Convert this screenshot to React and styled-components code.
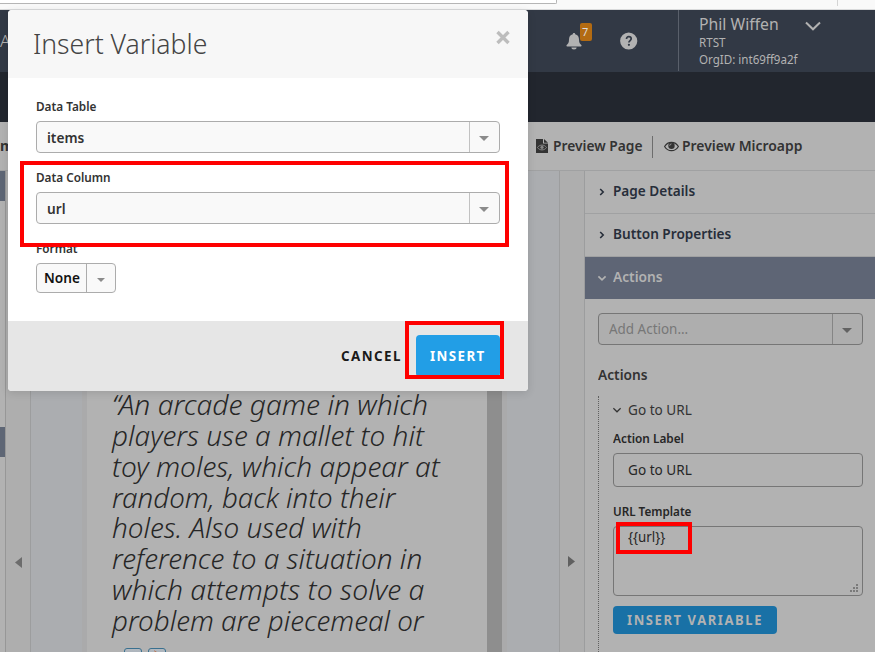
import React from "react";
import styled, { createGlobalStyle, css } from "styled-components";

const Global = createGlobalStyle`
  * { box-sizing: border-box; }
  html, body { margin: 0; padding: 0; overflow: hidden; }
  body { font-family: "Noto Sans", "Open Sans", sans-serif; background: #b2b2b2; }
`;

const Page = styled.div`
  position: relative;
  width: 875px;
  height: 652px;
  overflow: hidden;
  display: flex;
  flex-direction: column;
  background: #b2b2b2;
`;

/* A single line of text, squeezed horizontally by $x. */
const Text = styled.span`
  display: block;
  white-space: pre;
  transform-origin: 0 50%;
  font-size: ${(p) => p.$size || 14}px;
  line-height: ${(p) => p.$lh || 20}px;
  font-weight: ${(p) => p.$w || 400};
  color: ${(p) => p.$c || "#333"};
  ${(p) => p.$ls && css`letter-spacing: ${p.$ls}px;`}
  ${(p) => p.$x && css`transform: scaleX(${p.$x});`}
`;

const BrowserStrip = styled.div`
  flex: none;
  display: flex;
  height: 10px;
  background: #f9f9f9;
  border-bottom: 1px solid #d9dadb;
`;
const AddressBar = styled.div`
  width: 557px;
  height: 4px;
  background: #fff;
  border: solid #b5b5b5;
  border-width: 0 1px 1px 0;
  border-radius: 0 0 2px 0;
`;
const StripDivider = styled.div`
  width: 1px;
  height: 6px;
  margin-left: 280px;
  background: #d4d4d4;
`;

const Header = styled.header`
  flex: none;
  display: flex;
  height: 62px;
  background: #323945;
`;
const HeaderLead = styled.div`
  width: 566px;
  padding: 20px 0 0 0;
`;
const Bell = styled.div`
  position: relative;
  width: 54px;
  padding-top: 23px;
  svg { display: block; }
`;
const Badge = styled.div`
  position: absolute;
  left: 14px;
  top: 13px;
  width: 12px;
  height: 18px;
  border-radius: 2px;
  background: #b36b12;
  padding-left: 2px;
`;
const Help = styled.div`
  width: 58px;
  padding-top: 22px;
  svg { display: block; }
`;
const Account = styled.div`
  flex: 1;
  display: flex;
  height: 61px;
  padding: 2px 0 0 20px;
  border-left: 1px solid #5a606b;
`;
const AccountNames = styled.div`
  width: 106px;
`;
const AccountChevron = styled.svg`
  margin-top: 9px;
`;
const SubNav = styled.div`
  flex: none;
  height: 50px;
  background: #22262e;
`;

const Toolbar = styled.div`
  flex: none;
  display: flex;
  height: 49px;
  padding-top: 14px;
  border-bottom: 1px solid #a0a1a2;
  svg { flex: none; }
`;
const ToolbarLead = styled.div`
  width: 536px;
`;
const ToolLink = styled.div`
  display: flex;
  align-items: center;
  height: 20px;
  gap: ${(p) => p.$gap}px;
  width: ${(p) => p.$width}px;
`;
const ToolDivider = styled.div`
  width: 1px;
  height: 22px;
  margin-right: 11px;
  background: #6d6d6d;
`;

const Body = styled.main`
  flex: 1;
  display: flex;
  min-height: 0;
`;
const LeftRail = styled.div`
  display: flex;
  flex-direction: column;
  gap: 226px;
  width: 6px;
  border-right: 1px solid #979797;
`;
const RailBlock = styled.div`
  height: 30px;
  width: 5px;
  background: #5e6675;
`;
const Gutter = styled.div`
  width: 25px;
  padding: ${(p) => p.$pad};
  background: #aeaeae;
  border-right: 1px solid #9c9d9e;
  svg { display: block; }
`;
const Canvas = styled.div`
  display: flex;
  width: 529px;
  background: #abadb0;
  border-right: 1px solid #9c9d9e;
`;
const Edge = styled.div`
  width: 5px;
  background: #aaaaab;
`;
const CanvasSpace = styled.div`
  width: 51px;
`;
const Device = styled.div`
  width: 400px;
  padding: 218px 0 0 25px;
  background: #b2b2b2;
`;
const Quote = styled.div`
  height: 259px;
  font-style: italic;
`;
const BadgeRow = styled.div`
  display: flex;
  gap: 6px;
  padding-left: 12px;
`;
const SmallButton = styled.div`
  width: 18px;
  height: 12px;
  border: 1px solid #39708f;
  border-radius: 3px;
  background: linear-gradient(#b3b9bf, #9da9b7);
  svg { display: block; margin: 1px 0 0 5px; }
`;
const ScrollBar = styled.div`
  width: 15px;
  background: #8e8e8e;
`;

const Panel = styled.aside`
  flex: 1;
  display: flex;
  flex-direction: column;
`;
const Section = styled.div`
  flex: none;
  display: flex;
  align-items: center;
  height: 43px;
  padding: 0 0 3px 12px;
  gap: 6px;
  border-bottom: 1px solid ${(p) => (p.$open ? "#b2b2b2" : "#a0a1a2")};
  background: ${(p) => (p.$open ? "#5e6575" : "transparent")};
  svg { margin-top: 2px; }
`;
const PanelBody = styled.div`
  padding: 13px 12px 0 13px;
`;
const Select = styled.div`
  display: flex;
  width: ${(p) => p.$width}px;
  height: ${(p) => p.$height || 32}px;
  border: 1px solid ${(p) => p.$line || "#acacac"};
  border-radius: 4px;
  background: ${(p) => p.$bg || "#f9f9f9"};
`;
const SelectValue = styled.div`
  flex: 1;
  padding: ${(p) => p.$pad || "6px 0 0 9.5px"};
`;
const SelectArrow = styled.div`
  display: flex;
  align-items: center;
  justify-content: center;
  width: ${(p) => p.$width || 30}px;
  padding-right: 1px;
  border-left: 1px solid ${(p) => p.$line || "#c2c2c2"};
  svg { margin-top: 3px; }
`;
const PanelHeading = styled.div`
  padding-top: 20px;
`;
const ActionGroup = styled.div`
  height: 270px;
  margin-top: 11px;
  padding: 4px 0 0 14px;
  border-left: 1px dotted #606060;
`;
const GroupTitle = styled.div`
  display: flex;
  align-items: center;
  gap: 6px;
  margin: 0 0 10px -1px;
`;
const Input = styled.div`
  height: ${(p) => p.$height}px;
  margin: 5px 0 16px;
  padding: ${(p) => p.$pad} 0 0 14px;
  border: 1px solid #767676;
  border-radius: 4px;
`;
const TextArea = styled(Input)`
  position: relative;
  margin: 5px 0 10px;
`;
const Grip = styled.svg`
  position: absolute;
  right: 3px;
  bottom: 2px;
`;
const Button = styled.div`
  width: ${(p) => p.$width}px;
  height: ${(p) => p.$height}px;
  padding: ${(p) => p.$pad} 0 0 14px;
  border-radius: 4px;
  background: ${(p) => p.$bg};
`;

const Modal = styled.section`
  position: absolute;
  left: 8px;
  top: 10px;
  width: 520px;
  height: 381px;
  display: flex;
  flex-direction: column;
  border-radius: 4px;
  overflow: hidden;
  background: #fff;
  box-shadow: 0 2px 8px rgba(0, 0, 0, 0.12);
`;
const ModalHeader = styled.div`
  display: flex;
  justify-content: space-between;
  height: 68px;
  padding: 14px 18px 0 24.5px;
  background: #f7f7f7;
  svg { margin-top: 6px; }
`;
const ModalBody = styled.div`
  flex: 1;
  padding: 19px 28px 0;
`;
const Field = styled.div`
  height: 71px;
  display: flex;
  flex-direction: column;
  gap: 4px;
`;
const ModalFooter = styled.div`
  display: flex;
  height: 70px;
  padding: 14px 0 0 333px;
  background: #e6e6e6;
`;
const Cancel = styled.div`
  width: 75px;
  padding-top: 11px;
`;
const Highlight = styled.div`
  position: absolute;
  left: ${(p) => p.$l}px;
  top: ${(p) => p.$t}px;
  width: ${(p) => p.$w}px;
  height: ${(p) => p.$h}px;
  border: 4px solid #fe0000;
`;

const Caret = ({ color = "#8b8b8b", w = 10, h = 5 }) => (
  <svg width={w} height={h} viewBox="0 0 10 5" preserveAspectRatio="none"><path d="M0 0h10L5 5z" fill={color} /></svg>
);
const ChevronRight = () => (
  <svg width="10" height="10" viewBox="0 0 10 10" fill="none"><path d="M3.2 2 6.2 5 3.2 8" stroke="#272e3a" strokeWidth="1.6" /></svg>
);
const ChevronDown = ({ color, sw = 1.7 }) => (
  <svg width="10" height="10" viewBox="0 0 10 10" fill="none"><path d="M1.4 3.3 5 6.8 8.6 3.3" stroke={color} strokeWidth={sw} /></svg>
);
const EyeIcon = () => (
  <svg width="15" height="11" viewBox="0 0 15 11">
    <path d="M.6 5.5C2.2 2.8 4.6 1.3 7.5 1.3s5.3 1.5 6.900 4.200c-1.600 2.700-4 4.200-6.900 4.200S2.200 8.200.6 5.500Z" fill="none" stroke="#333" strokeWidth="1.200" />
    <circle cx="7.500" cy="4.800" r="3.200" fill="#333" />
    <path d="M5.700 4.800a1.900 1.900 0 0 1 1.800-1.900" fill="none" stroke="#aaa" strokeWidth=".8" />
  </svg>
);
const FileEyeIcon = () => (
  <svg width="12" height="14" viewBox="0 0 12 14">
    <path d="M0 0h7v4.500h5V14H0z" fill="#333" />
    <path d="M8 0l4 3.700H8z" fill="#333" />
    <path d="M1.500 8.500C3.500 5.300 8.500 5.300 10.500 8.500 8.500 11.700 3.500 11.700 1.500 8.500Z" fill="none" stroke="#888" strokeWidth="1" />
    <circle cx="6" cy="8.300" r="1.600" fill="#888" />
  </svg>
);
const BellIcon = () => (
  <svg width="16" height="17" viewBox="0 0 16 17">
    <path d="M8 0c.8 0 1.200.5 1.200 1.200C11.800 1.800 13 3.700 13 6.500c0 3 .8 4.300 2.300 5.600.5.500.3 1.400-.5 1.400H1.200c-.8 0-1-.9-.5-1.400C2.200 10.800 3 9.500 3 6.500c0-2.800 1.200-4.700 3.800-5.300C6.800.5 7.200 0 8 0Z" fill="#b2b2b2" />
    <path d="M5.300 14.600h5.400a2.700 2 0 0 1-5.400 0z" fill="#b2b2b2" />
  </svg>
);
const HelpIcon = () => (
  <svg width="18" height="18" viewBox="0 0 18 18">
    <circle cx="8.700" cy="9" r="8.600" fill="#b2b2b2" />
    <path d="M6.500 7C6.500 5.400 7.400 4.700 8.800 4.700s2.400.8 2.400 2.100c0 1.700-2.300 1.800-2.300 3.700" fill="none" stroke="#323945" strokeWidth="1.700" />
    <circle cx="8.900" cy="12.800" r="1.100" fill="#323945" />
  </svg>
);

const LINES = [
  ["“An arcade game in which", 1.009],
  ["players use a mallet to hit", 0.998],
  ["toy moles, which appear at", 1.003],
  ["random, back into their", 0.99],
  ["holes. Also used with", 0.997],
  ["reference to a situation in", 0.999],
  ["which attempts to solve a", 1.012],
  ["problem are piecemeal or", 0.993],
];

export default function App() {
  return (
    <>
      <Global />
      <Page>
        <BrowserStrip><AddressBar /><StripDivider /></BrowserStrip>
        <Header>
          <HeaderLead><Text $size={17} $lh={22} $w={300} $c="#b2b2b2">Ac</Text></HeaderLead>
          <Bell><BellIcon /><Badge><Text $size={11} $lh={17} $c="#ddd">7</Text></Badge></Bell>
          <Help><HelpIcon /></Help>
          <Account>
            <AccountNames>
              <Text $size={16} $lh={24} $c="#b2b2b2" $x={0.985}>Phil Wiffen</Text>
              <Text $size={12} $lh={14} $c="#b2b2b2" $x={0.97}>RTST</Text>
              <Text $size={12} $lh={20} $c="#b2b2b2" $x={0.965}>OrgID: int69ff9a2f</Text>
            </AccountNames>
            <AccountChevron width="16" height="10" viewBox="0 0 16 10" fill="none"><path d="M1 1.500 8 8.300 15 1.500" stroke="#b2b2b2" strokeWidth="2" /></AccountChevron>
          </Account>
        </Header>
        <SubNav />
        <Toolbar>
          <ToolbarLead><Text $w={700}>m</Text></ToolbarLead>
          <ToolLink $gap={4.5} $width={116}><FileEyeIcon /><Text $w={600} $x={0.985}>Preview Page</Text></ToolLink>
          <ToolDivider />
          <ToolLink $gap={2.5} $width={140}><EyeIcon /><Text $w={600} $x={0.993}>Preview Microapp</Text></ToolLink>
        </Toolbar>
        <Body>
          <LeftRail><RailBlock /><RailBlock /></LeftRail>
          <Gutter $pad="386px 0 0 9px"><svg width="7" height="11" viewBox="0 0 7 11"><path d="M7 0v11L0 5.500z" fill="#6c6c6c" /></svg></Gutter>
          <Canvas>
            <CanvasSpace />
            <Edge />
            <Device>
              <Quote>
                {LINES.map(([t, x]) => <Text key={t} $size={28} $lh={30.85} $w={300} $c="#262626" $x={x}>{t}</Text>)}
              </Quote>
              <BadgeRow>
                <SmallButton />
                <SmallButton><svg width="8" height="8" viewBox="0 0 8 8"><path d="M0 0l7 5H2z" fill="#b87350" /></svg></SmallButton>
              </BadgeRow>
            </Device>
            <ScrollBar />
            <Edge />
          </Canvas>
          <Gutter $pad="385px 0 0 8px"><svg width="7" height="11" viewBox="0 0 7 11"><path d="M0 0v11l7-5.500z" fill="#606060" /></svg></Gutter>
          <Panel>
            <Section><ChevronRight /><Text $w={600} $c="#272e3a" $x={0.972}>Page Details</Text></Section>
            <Section><ChevronRight /><Text $w={600} $c="#272e3a" $x={0.973}>Button Properties</Text></Section>
            <Section $open><ChevronDown color="#b2b2b2" /><Text $w={600} $c="#b2b2b2" $x={0.98}>Actions</Text></Section>
            <PanelBody>
              <Select $width={265} $line="#767676" $bg="#aeaeae">
                <SelectValue><Text $lh={18} $c="#777" $x={0.96}>Add Action...</Text></SelectValue>
                <SelectArrow $line="#858585"><Caret color="#626262" /></SelectArrow>
              </Select>
              <PanelHeading><Text $w={600} $x={0.98}>Actions</Text></PanelHeading>
              <ActionGroup>
                <GroupTitle><ChevronDown color="#333" sw={1.2} /><Text $x={0.97}>Go to URL</Text></GroupTitle>
                <Text $size={12} $lh={18} $w={600} $c="#262626" $x={0.985}>Action Label</Text>
                <Input $height={34} $pad="6px"><Text $c="#262626" $x={0.97}>Go to URL</Text></Input>
                <Text $size={12} $lh={18} $w={600} $c="#262626" $x={0.972}>URL Template</Text>
                <TextArea $height={70} $pad="0">
                  <Text $c="#262626" $x={0.95}>{"{{url}}"}</Text>
                  <Grip width="9" height="9" viewBox="0 0 9 9"><path d="M6 0h2v2H6zM3 3h2v2H3zM6 3h2v2H6zM0 6h2v2H0zM3 6h2v2H3zM6 6h2v2H6z" fill="#7a7a7a" /></Grip>
                </TextArea>
                <Button $width={164} $height={28} $pad="4px" $bg="#1971a6"><Text $w={700} $ls={1.7} $c="#b2b2b2" $x={0.93}>INSERT VARIABLE</Text></Button>
              </ActionGroup>
            </PanelBody>
          </Panel>
        </Body>
        <Modal>
          <ModalHeader>
            <Text $size={27} $lh={40} $w={300} $c="#444" $x={0.983}>Insert Variable</Text>
            <svg width="14" height="42" viewBox="0 0 14 42"><path d="M1.500 2l11 11M12.500 2l-11 11" stroke="#bdbdbd" strokeWidth="3.400" /></svg>
          </ModalHeader>
          <ModalBody>
            <Field>
              <Text $size={12} $w={600} $x={0.98}>Data Table</Text>
              <Select $width={464}><SelectValue><Text $w={600} $x={0.975}>items</Text></SelectValue><SelectArrow><Caret /></SelectArrow></Select>
            </Field>
            <Field>
              <Text $size={12} $w={600} $x={0.98}>Data Column</Text>
              <Select $width={464}><SelectValue><Text $w={600} $x={0.975}>url</Text></SelectValue><SelectArrow><Caret /></SelectArrow></Select>
            </Field>
            <Field>
              <Text $size={12} $w={600} $x={0.98}>Format</Text>
              <Select $width={80} $height={30}><SelectValue $pad="4px 0 0 6.500px"><Text $w={600} $c="#111" $x={0.975}>None</Text></SelectValue><SelectArrow $width={29} $line="#acacac"><Caret w={8} h={4} /></SelectArrow></Select>
            </Field>
          </ModalBody>
          <ModalFooter>
            <Cancel><Text $w={700} $ls={1.5} $c="#1a1a1a" $x={0.955}>CANCEL</Text></Cancel>
            <Button $width={84} $height={42} $pad="11px" $bg="#229ee6"><Text $w={700} $ls={1.5} $c="#fff" $x={0.95}>INSERT</Text></Button>
          </ModalFooter>
        </Modal>
        <Highlight $l={20} $t={161} $w={489} $h={86} />
        <Highlight $l={405} $t={321} $w={99} $h={58} />
        <Highlight $l={616} $t={522} $w={76} $h={32} />
      </Page>
    </>
  );
}
